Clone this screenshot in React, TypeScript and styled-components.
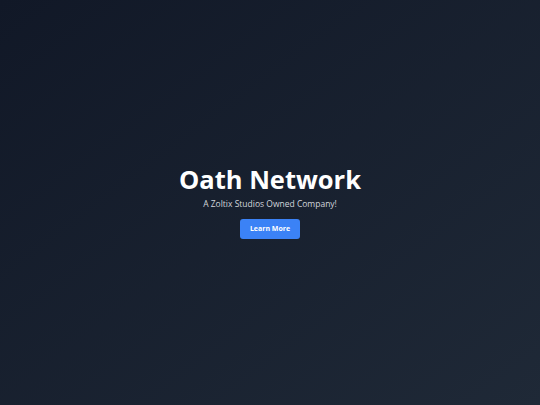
import React from "react";
import styled, { createGlobalStyle } from "styled-components";

const Global = createGlobalStyle`
  html, body { margin: 0; padding: 0; height: 100%; }
  #root { height: 100%; }
  body { font-family: "Open Sans", "Noto Sans", sans-serif; }
`;

const Hero = styled.main`
  height: 405px;
  width: 100%;
  box-sizing: border-box;
  padding-bottom: 3px;
  display: flex;
  flex-direction: column;
  align-items: center;
  justify-content: center;
  background: linear-gradient(to bottom right, #111827, #1f2937);
  color: #fff;
  text-align: center;
`;

const Title = styled.h1`
  margin: 0;
  font-size: 25.5px;
  font-weight: 700;
  line-height: 30px;
  letter-spacing: 0;
`;

const Subtitle = styled.p`
  margin: 3px 0 0;
  font-size: 8.5px;
  line-height: 14px;
  color: #d1d5db;
`;

const Button = styled.button`
  margin-top: 8px;
  width: 60px;
  height: 20px;
  border: none;
  border-radius: 3px;
  background: #3b82f6;
  color: #fff;
  font-family: "Open Sans", "Noto Sans", sans-serif;
  font-weight: 700;
  font-size: 7px;
  padding: 0;
  cursor: pointer;
`;

export default function App() {
  return (
    <>
      <Global />
      <Hero>
        <Title>Oath Network</Title>
        <Subtitle>A Zoltix Studios Owned Company!</Subtitle>
        <Button>Learn More</Button>
      </Hero>
    </>
  );
}
